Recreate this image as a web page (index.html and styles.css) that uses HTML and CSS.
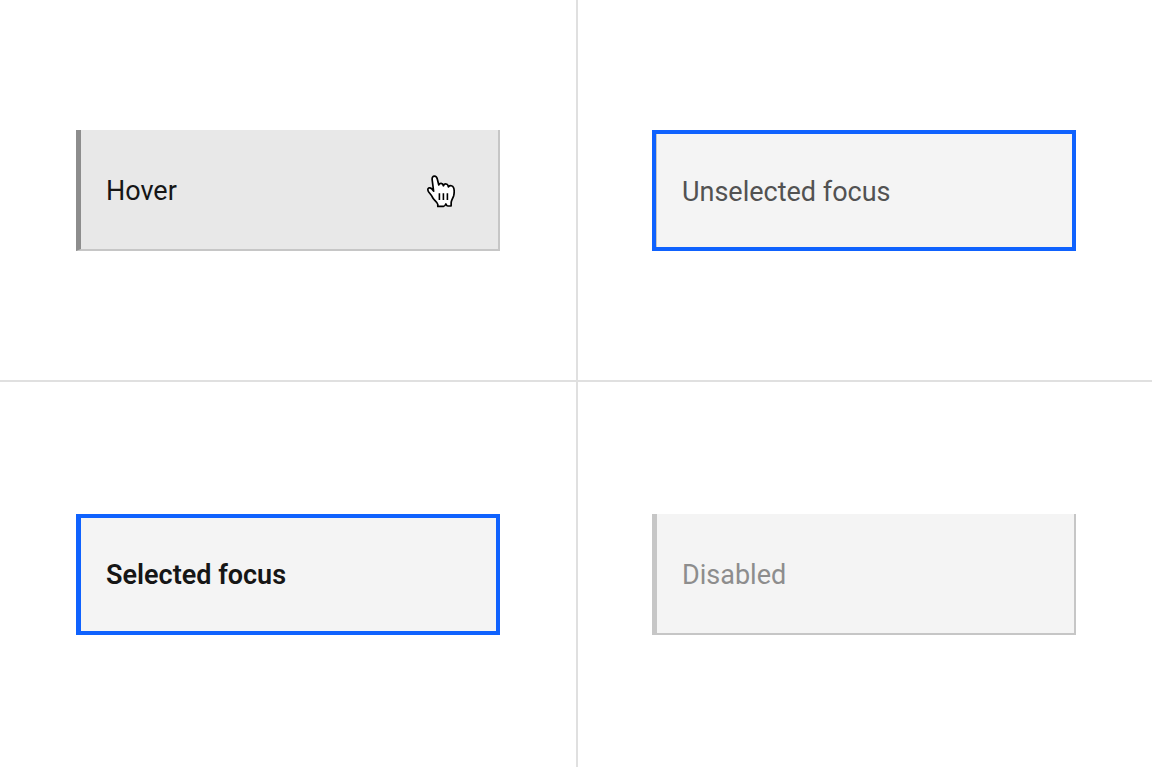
FILE: index.html
```html
<!DOCTYPE html>
<html lang="en">
<head>
  <meta charset="UTF-8" />
  <meta name="viewport" content="width=device-width, initial-scale=1" />
  <title>Vertical tab states</title>
  <link rel="stylesheet" href="styles.css">
</head>
<body>

  <main class="states">
    <div class="state">
      <button type="button" class="tab tab-hover">
        Hover
        <!-- Pointer -->
        <svg class="pointer" viewBox="0 0 28 33" aria-hidden="true">
          <path class="pointer-hand" d="M6.6 16.2 L5.2 5 C4.8 2.6 5.8 1.1 7.5 1.1 C9.2 1.1 9.9 2.3 10.3 4 L11.8 10 C12.6 8 15.6 7.6 16.4 10.8 C17.5 8.2 20.7 8.2 21.4 11.8 C23.2 10 25.7 10.5 26.6 12.8 C27.4 15 27.3 18.2 26.6 21 C25.9 23.3 24.4 25 24.2 27.2 L24.1 31 L20.8 31 C20 31 19.4 30.2 18.8 29 C18.2 30.3 17.5 31.4 16.6 31.4 L10.8 31.4 L10.8 29.4 C10.3 27.2 7.2 25.4 5.9 23 C4.8 20.8 3.5 19 1.9 17.2 C.6 15.5 .5 13.9 1.6 13.1 C3.2 12.2 5 13.4 6.6 16.2 Z" />
          <path class="pointer-folds" d="M12.4 18.2 V25 M16.4 18.2 V25 M20.4 18.2 V25" />
        </svg>
      </button>
    </div>

    <div class="state">
      <button type="button" class="tab tab-focus">Unselected focus</button>
    </div>

    <div class="state">
      <button type="button" class="tab tab-selected">Selected focus</button>
    </div>

    <div class="state">
      <button type="button" class="tab tab-disabled" disabled>Disabled</button>
    </div>
  </main>

</body>
</html>
```
FILE: styles.css
```css
* {
  margin: 0;
  padding: 0;
  box-sizing: border-box;
}

body {
  background: #fff;
  font-family: Roboto, "Liberation Sans", sans-serif;
}

/* GRID */
.states {
  display: grid;
  grid-template-columns: 1fr 1fr;
}

.state {
  padding: 132px 76px;
}

.state:nth-child(-n+2) {
  padding-top: 130px;
  padding-bottom: 129px;
  border-bottom: 2px solid #e0e0e0;
}

.state:nth-child(even) {
  padding-left: 74px;
  border-left: 2px solid #e0e0e0;
}

/* TABS */
.tab {
  display: flex;
  align-items: center;
  justify-content: space-between;
  width: 100%;
  min-height: 121px;
  padding: 3px 43px 0 25px;
  background: #f4f4f4;
  border: 0 solid #c6c6c6;
  border-left-width: 5px;
  color: #525252;
  font-family: inherit;
  font-size: 27px;
  line-height: 36px;
  text-align: left;
  cursor: pointer;
}

.tab-hover {
  background: #e8e8e8;
  border-width: 0 2px 2px 5px;
  border-color: #c6c6c6 #c6c6c6 #c6c6c6 #8d8d8d;
  color: #161616;
}

.tab-focus,
.tab-selected {
  border: 4px solid #0f62fe;
  outline: none;
}

.tab-focus {
  padding-left: 26px;
  box-shadow: inset 1px 0 #c6c6c6;
}

.tab-selected {
  padding-top: 0;
  border-left-width: 5px;
  color: #161616;
  font-weight: 600;
}

.tab-disabled {
  border-width: 0 2px 2px 5px;
  color: #8d8d8d;
  cursor: not-allowed;
}

/* POINTER */
.pointer {
  width: 28px;
  height: 33px;
}

.pointer-hand {
  fill: #fff;
  stroke: #000;
  stroke-width: 1.7;
  stroke-linejoin: round;
}

.pointer-folds {
  fill: none;
  stroke: #000;
  stroke-width: 1.6;
}
```
